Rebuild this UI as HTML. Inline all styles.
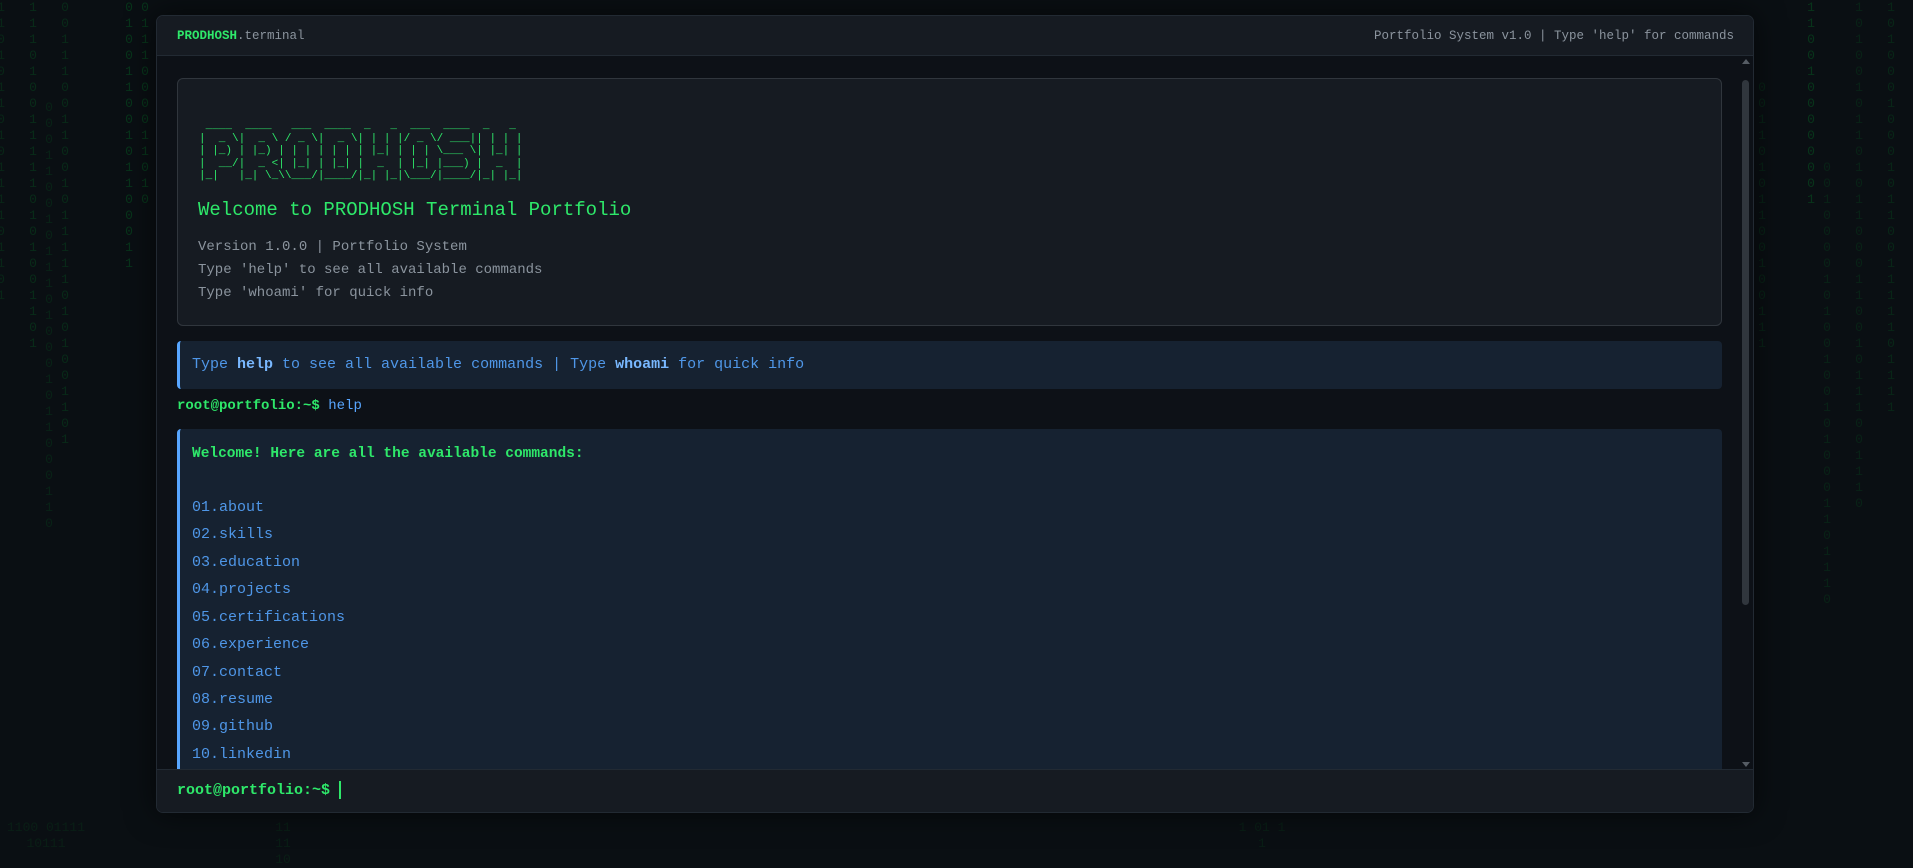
<!DOCTYPE html>
<html><head><meta charset="utf-8"><style>
*{margin:0;padding:0;box-sizing:border-box}
html,body{width:1913px;height:866px;overflow:hidden;background:#0a0f13;font-family:"Liberation Mono",monospace}
.col{position:absolute;color:#00c837;font-size:13px;line-height:16px;width:10px;text-align:center;word-break:break-all;white-space:normal}
.term{position:absolute;left:156px;top:15px;width:1598px;height:798px;background:#0d1117;border:1px solid #222a33;border-radius:7px;overflow:hidden;box-shadow:0 0 30px rgba(0,0,0,.6)}
.hdr{height:40px;background:#161b22;border-bottom:1px solid #222a33;display:flex;justify-content:space-between;align-items:center;padding:0 19px 0 20px;font-size:12.5px;color:#8b949e}
.hdr b{color:#2ee86a}
.body{position:absolute;left:0;top:40px;width:1586px;height:715px;overflow:hidden}
.banner{position:absolute;left:20px;top:22px;width:1545px;height:248px;background:#161b22;border:1px solid #30363d;border-radius:6px}
.ascii{position:absolute;left:21px;top:41px;color:#2ee86a;font-size:11px;line-height:12.5px;white-space:pre}
.wel{position:absolute;left:20px;top:120px;color:#2ee86a;font-size:19px}
.ln{position:absolute;left:20px;color:#8b949e;font-size:14px}
.info{position:absolute;left:20px;top:285px;width:1545px;height:48px;background:#162231;border-left:3px solid #58a6ff;border-radius:4px;color:#4f97e8;font-size:15px;padding:0 0 0 12px;line-height:48px}
.info b{color:#79b8ff}
.pr{position:absolute;left:20px;top:342px;font-size:14px;color:#2ee86a;font-weight:bold}
.pr span{color:#58a6ff;font-weight:normal}
.help{position:absolute;left:20px;top:373px;width:1545px;height:400px;background:#162231;border-left:3px solid #58a6ff;border-radius:4px}
.help .h{position:absolute;left:12px;top:17px;color:#2ee86a;font-weight:bold;font-size:14.5px}
.help .it{position:absolute;left:12px;color:#4f97e8;font-size:15px}
.sb{position:absolute;right:2px;top:40px;width:10px;height:715px}
.thumb{position:absolute;left:1px;top:24px;width:7px;height:525px;background:#30363d;border-radius:4px}
.inp{position:absolute;left:0;bottom:0;width:100%;height:43px;background:#161b22;border-top:1px solid #222a33;padding-left:20px;line-height:42px;font-size:15px;color:#2ee86a;font-weight:bold}
.cur{display:inline-block;width:1.5px;height:18px;background:#2ee86a;vertical-align:middle;margin-left:9px}
</style></head><body>
<div class="col" style="left:-4px;top:0;opacity:.12">1101011010111101101</div>
<div class="col" style="left:28px;top:0;opacity:.15">1110100111110101001101</div>
<div class="col" style="left:44px;top:100px;opacity:.1">000110010111010001011000110</div>
<div class="col" style="left:60px;top:0;opacity:.14">0011100110010111110101001101</div>
<div class="col" style="left:124px;top:0;opacity:.2">01001100101100011</div>
<div class="col" style="left:140px;top:0;opacity:.2">0111000011010</div>
<div class="col" style="left:1757px;top:80px;opacity:.1">00110101100100111</div>
<div class="col" style="left:1806px;top:0;opacity:.2">1100100000001</div>
<div class="col" style="left:1822px;top:160px;opacity:.1">0010000101001001010001101110</div>
<div class="col" style="left:1854px;top:0;opacity:.1">10100101101011000110010111001110</div>
<div class="col" style="left:1886px;top:0;opacity:.12">10100010001011001111101111</div>
<div class="col" style="left:6px;top:820px;opacity:.08;width:80px">1100 01111 10111</div>
<div class="col" style="left:268px;top:820px;opacity:.08;width:30px">11 11 10</div>
<div class="col" style="left:1232px;top:820px;opacity:.08;width:60px">1 01 1 1</div>
<div class="term">
<div class="hdr"><div><b>PRODHOSH</b>.terminal</div><div>Portfolio System v1.0 | Type 'help' for commands</div></div>
<div class="body">
<div class="banner">
<div class="ascii"> ____  ____   ___  ____  _   _  ___  ____  _   _ 
|  _ \|  _ \ / _ \|  _ \| | | |/ _ \/ ___|| | | |
| |_) | |_) | | | | | | | |_| | | | \___ \| |_| |
|  __/|  _ &lt;| |_| | |_| |  _  | |_| |___) |  _  |
|_|   |_| \_\\___/|____/|_| |_|\___/|____/|_| |_|</div>
<div class="wel">Welcome to PRODHOSH Terminal Portfolio</div>
<div class="ln" style="top:160px">Version 1.0.0 | Portfolio System</div>
<div class="ln" style="top:183px">Type 'help' to see all available commands</div>
<div class="ln" style="top:206px">Type 'whoami' for quick info</div>
</div>
<div class="info">Type <b>help</b> to see all available commands | Type <b>whoami</b> for quick info</div>
<div class="pr">root@portfolio:~$ <span>help</span></div>
<div class="help">
<div class="h">Welcome! Here are all the available commands:</div>
<div class="it" style="top:70px">01.about</div>
<div class="it" style="top:97px">02.skills</div>
<div class="it" style="top:125px">03.education</div>
<div class="it" style="top:152px">04.projects</div>
<div class="it" style="top:180px">05.certifications</div>
<div class="it" style="top:207px">06.experience</div>
<div class="it" style="top:235px">07.contact</div>
<div class="it" style="top:262px">08.resume</div>
<div class="it" style="top:289px">09.github</div>
<div class="it" style="top:317px">10.linkedin</div>
</div>
</div>
<div class="sb"><div style="position:absolute;left:1px;top:3px;width:0;height:0;border-left:4px solid transparent;border-right:4px solid transparent;border-bottom:5px solid #555c64"></div><div class="thumb"></div><div style="position:absolute;left:1px;top:706px;width:0;height:0;border-left:4px solid transparent;border-right:4px solid transparent;border-top:5px solid #555c64"></div></div>
<div class="inp">root@portfolio:~$<span class="cur"></span></div>
</div>
</body></html>
